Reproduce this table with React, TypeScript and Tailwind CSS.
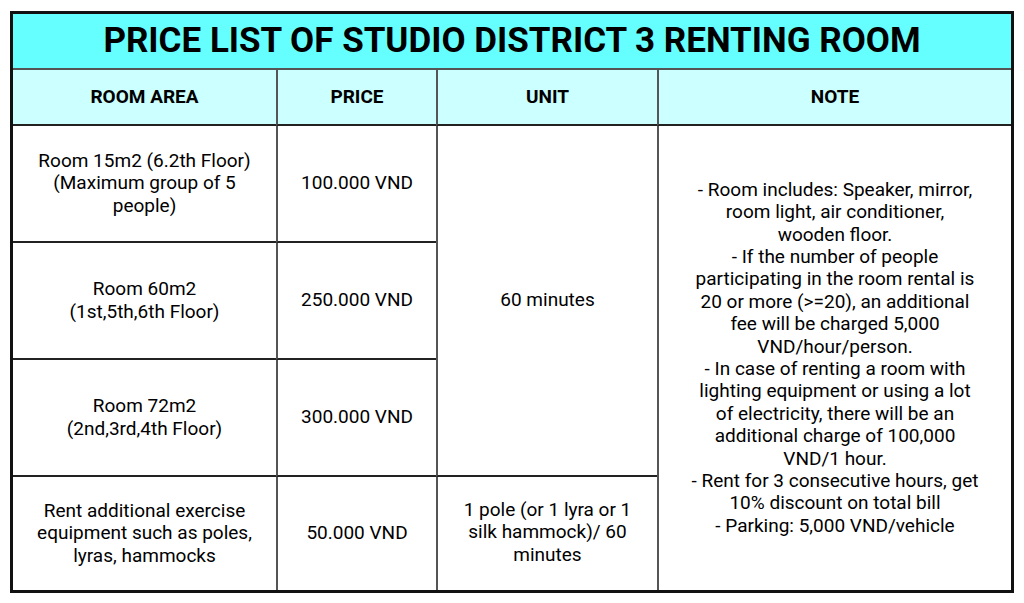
const rooms = [
  { area: ["Room 15m2 (6.2th Floor)", "(Maximum group of 5", "people)"], price: "100.000 VND" },
  { area: ["Room 60m2", "(1st,5th,6th Floor)"], price: "250.000 VND" },
  { area: ["Room 72m2", "(2nd,3rd,4th Floor)"], price: "300.000 VND" },
  {
    area: ["Rent additional exercise", "equipment such as poles,", "lyras, hammocks"],
    price: "50.000 VND",
  },
];

const notes = [
  "- Room includes: Speaker, mirror,",
  "room light, air conditioner,",
  "wooden floor.",
  "- If the number of people",
  "participating in the room rental is",
  "20 or more (>=20), an additional",
  "fee will be charged 5,000",
  "VND/hour/person.",
  "- In case of renting a room with",
  "lighting equipment or using a lot",
  "of electricity, there will be an",
  "additional charge of 100,000",
  "VND/1 hour.",
  "- Rent for 3 consecutive hours, get",
  "10% discount on total bill",
  "- Parking: 5,000 VND/vehicle",
];

function Lines({ lines }: { lines: string[] }) {
  return (
    <>
      {lines.map((l, i) => (
        <span key={i} className="block whitespace-nowrap">
          {l}
        </span>
      ))}
    </>
  );
}

export default function App() {
  return (
    <div
      className="min-h-screen bg-white pl-[10px] pt-[11px] text-black"
      style={{ fontFamily: "Roboto, 'Liberation Sans', sans-serif" }}
    >
      <div className="w-[1004px] h-[582px] border-[3px] border-[#111]">
        <div className="flex h-[56px] items-center justify-center border-b-2 border-[#555] bg-[#66ffff] pb-[2px] text-[35px] font-bold leading-none">
          PRICE LIST OF STUDIO DISTRICT 3 RENTING ROOM
        </div>
        <div className="grid h-[520px] grid-cols-[263px_160px_221px_1fr] grid-rows-[56px_117px_117px_117px_1fr] text-[19px] leading-[22.4px]">
          {["ROOM AREA", "PRICE", "UNIT", "NOTE"].map((h, i) => (
            <div
              key={h}
              className={`flex items-center justify-center border-b-2 border-[#222] bg-[#ccffff] text-[19px] font-bold ${
                i > 0 ? "border-l-2 border-l-[#555]" : ""
              }`}
            >
              {h}
            </div>
          ))}

          {rooms.map((r, i) => (
            <div key={`a${i}`} className="contents">
              <div
                className={`col-start-1 flex flex-col items-center justify-center text-center ${
                  i < 3 ? "border-b-2 border-[#222]" : ""
                }`}
                style={{ gridRowStart: i + 2 }}
              >
                <Lines lines={r.area} />
              </div>
              <div
                className={`col-start-2 flex items-center justify-center border-l-2 border-l-[#555] text-center ${
                  i < 3 ? "border-b-2 border-b-[#222]" : ""
                }`}
                style={{ gridRowStart: i + 2 }}
              >
                {r.price}
              </div>
            </div>
          ))}

          <div className="col-start-3 row-start-2 row-span-3 flex items-center justify-center border-b-2 border-l-2 border-b-[#222] border-l-[#555]">
            60 minutes
          </div>
          <div className="col-start-3 row-start-5 flex flex-col items-center justify-center border-l-2 border-l-[#555] pb-[2px] text-center">
            <Lines lines={["1 pole (or 1 lyra or 1", "silk hammock)/ 60", "minutes"]} />
          </div>

          <div className="col-start-4 row-start-2 row-span-4 flex flex-col items-center justify-center border-l-2 border-l-[#555] text-center">
            <Lines lines={notes} />
          </div>
        </div>
      </div>
    </div>
  );
}
